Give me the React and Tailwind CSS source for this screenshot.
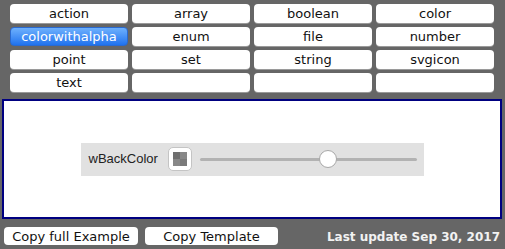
import React from "react";

const items = [
  "action", "array", "boolean", "color",
  "colorwithalpha", "enum", "file", "number",
  "point", "set", "string", "svgicon",
  "text", "", "", "",
];

export default function App() {
  return (
    <div className="w-[505px] h-[249px] bg-[#666666] overflow-hidden font-['DejaVu_Sans',sans-serif] text-[13px]">
      <div className="grid grid-cols-4 gap-x-[4px] gap-y-[4px] pl-[10px] pr-[11px] pt-[4px]">
        {items.map((t, i) =>
          t === "colorwithalpha" ? (
            <div
              key={i}
              className="h-[19px] rounded-[4px] bg-gradient-to-b from-[#6db0fd] to-[#1f72ee] border border-[#2a6ad0] text-white flex items-center justify-center leading-none"
            >
              {t}
            </div>
          ) : (
            <div
              key={i}
              className="h-[19px] rounded-[4px] bg-white shadow-[0_1px_0_#9a9a9a] text-[#111] flex items-center justify-center leading-none"
            >
              {t}
            </div>
          )
        )}
      </div>

      <div className="mt-[7px] mx-[2px] h-[120px] w-[500px] border-2 border-[#000080] bg-white flex items-center justify-center">
        <div className="w-[343px] h-[33px] bg-[#e1e1e1] flex items-center pl-[8px] pr-[7px]">
          <span className="font-['Liberation_Sans',sans-serif] text-[13px] text-[#222]">wBackColor</span>
          <div className="ml-[10px] w-[24px] h-[24px] shrink-0 rounded-[5px] bg-white border border-[#c4c4c4] flex items-center justify-center">
            <div className="grid grid-cols-2 w-[14px] h-[14px]">
              <div className="bg-[#6f6f6f]" />
              <div className="bg-[#888888]" />
              <div className="bg-[#888888]" />
              <div className="bg-[#7a7a7a]" />
            </div>
          </div>
          <div className="relative ml-[8px] flex-1 h-[18px] flex items-center">
            <div className="w-full h-[3px] bg-[#b2b2b2] rounded-full" />
            <div className="absolute left-[119px] top-0 w-[18px] h-[18px] rounded-full bg-white border border-[#a8a8a8]" />
          </div>
        </div>
      </div>

      <div className="flex items-center mt-[8px] pl-[4px] pr-[5px]">
        <div className="w-[134px] h-[18px] rounded-[4px] bg-white text-[#111] flex items-center justify-center leading-none">
          Copy full Example
        </div>
        <div className="ml-[7px] w-[133px] h-[18px] rounded-[4px] bg-white text-[#111] flex items-center justify-center leading-none">
          Copy Template
        </div>
        <div className="ml-auto font-bold text-[12px] text-[#f2f2f2] leading-none pt-[2px]">Last update Sep 30, 2017</div>
      </div>
    </div>
  );
}
